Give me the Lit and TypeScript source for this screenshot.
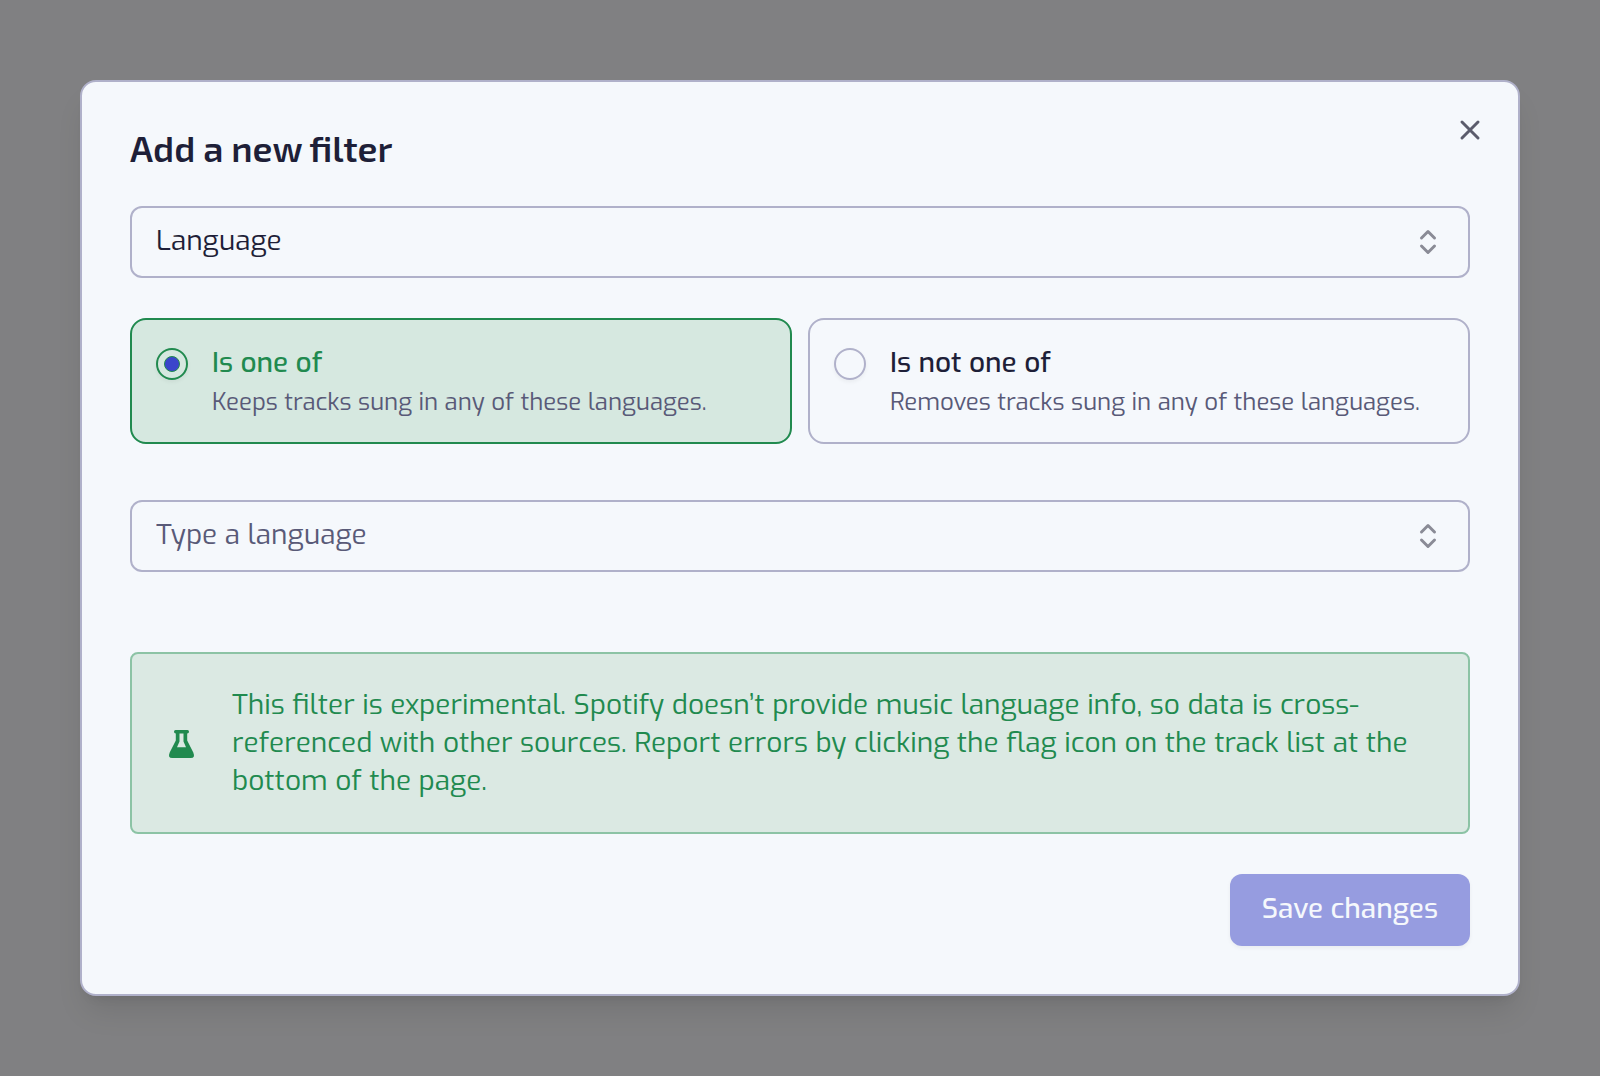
import { LitElement, html, css, svg } from "lit";
import { customElement, state } from "lit/decorators.js";

interface Choice {
  value: string;
  label: string;
  description: string;
}

const CHOICES: Choice[] = [
  { value: "is", label: "Is one of", description: "Keeps tracks sung in any of these languages." },
  { value: "is-not", label: "Is not one of", description: "Removes tracks sung in any of these languages." },
];

const chevrons = html`<svg class="chevrons" viewBox="0 0 32 32" aria-hidden="true">
  ${svg`<path d="M9.500 12L16 5.500L22.500 12M9.500 20L16 26.500L22.500 20" />`}
</svg>`;

@customElement("app-root")
export class AppRoot extends LitElement {
  static styles = css`
    :host {
      --surface: #f5f8fc;
      --ink: #1e1f38;
      --muted: #595a78;
      --line: #b0b1ca;
      --green: #218a4f;
      display: flex;
      align-items: center;
      box-sizing: border-box;
      min-height: 100vh;
      padding: 80px;
      background: #808082;
      color: var(--ink);
      font-family: Exo, "Exo 2", Roboto, "Liberation Sans", sans-serif;
      font-size: 28px;
      line-height: 38px;
    }
    * {
      box-sizing: border-box;
    }
    button,
    input,
    select {
      font: inherit;
      color: inherit;
      margin: 0;
    }
    .dialog {
      position: relative;
      flex: 1;
      min-width: 0;
      display: flex;
      flex-direction: column;
      padding: 48px;
      border: 2px solid var(--line);
      border-radius: 16px;
      background: var(--surface);
      box-shadow: 0 20px 30px -6px rgb(0 0 0 / 0.1), 0 8px 12px -8px rgb(0 0 0 / 0.1);
    }
    .title {
      margin: 0 0 40px;
      font-family: "Exo 2", Exo, Roboto, "Liberation Sans", sans-serif;
      font-size: 36px;
      line-height: 36px;
      font-weight: 600;
    }
    .close {
      position: absolute;
      top: 32px;
      right: 32px;
      width: 32px;
      height: 32px;
      padding: 0;
      border: 0;
      background: none;
      color: #5b5c6c;
    }
    .close svg {
      display: block;
      width: 32px;
      height: 32px;
      fill: none;
      stroke: currentColor;
      stroke-width: 3;
      stroke-linecap: round;
    }
    .field {
      position: relative;
      display: flex;
    }
    .control {
      flex: 1;
      min-width: 0;
      height: 72px;
      padding: 0 72px 4px 24px;
      border: 2px solid var(--line);
      border-radius: 12px;
      background: transparent;
      appearance: none;
      outline: none;
    }
    select.control {
      padding-bottom: 2px;
    }
    .control::placeholder {
      color: var(--muted);
      opacity: 1;
    }
    .chevrons {
      position: absolute;
      top: 20px;
      right: 26px;
      width: 32px;
      height: 32px;
      fill: none;
      stroke: #8a8b96;
      stroke-width: 3;
      stroke-linecap: round;
      stroke-linejoin: round;
      pointer-events: none;
    }
    .choices {
      display: grid;
      grid-template-columns: 1fr 1fr;
      gap: 16px;
      margin: 40px 0 56px;
      padding: 0;
      border: 0;
      min-width: 0;
    }
    .choice {
      display: flex;
      gap: 24px;
      padding: 24px 24px 20px;
      border: 2px solid var(--line);
      border-radius: 16px;
    }
    .choice.selected {
      border-color: var(--green);
      background: #d6e8e0;
    }
    .radio {
      flex: none;
      display: grid;
      place-items: center;
      width: 32px;
      height: 32px;
      margin-top: 4px;
      border: 2px solid var(--line);
      border-radius: 50%;
      appearance: none;
      box-shadow: 0 2px 4px rgb(0 0 0 / 0.05);
    }
    .radio:checked {
      border-color: var(--green);
    }
    .radio:checked::before {
      content: "";
      width: 14px;
      height: 14px;
      border: 1px solid var(--green);
      border-radius: 50%;
      background: #3b45cb;
    }
    .choice-text {
      display: flex;
      flex-direction: column;
    }
    .choice-label {
      font-weight: 500;
    }
    .selected .choice-label {
      color: var(--green);
    }
    .choice-description {
      font-size: 24px;
      line-height: 40px;
      color: var(--muted);
    }
    .notice {
      display: flex;
      align-items: center;
      gap: 32px;
      margin: 80px 0 40px;
      padding: 32px;
      border: 2px solid #8cc3a5;
      border-radius: 8px;
      background: #dbe9e3;
      color: var(--green);
    }
    .notice p {
      margin: 0;
    }
    .flask {
      flex: none;
      width: 36px;
      height: 36px;
      fill: currentColor;
    }
    .save {
      align-self: flex-end;
      height: 72px;
      padding: 0 32px 2px;
      border: 0;
      border-radius: 12px;
      background: #969ce0;
      color: var(--surface);
      font-weight: 500;
      box-shadow: 0 2px 4px rgb(0 0 0 / 0.05);
    }
  `;

  @state() private choice = "is";

  render() {
    return html`
      <section class="dialog" role="dialog" aria-labelledby="title">
        <h1 class="title" id="title">Add a new filter</h1>
        <button class="close" type="button" aria-label="Close">
          <svg viewBox="0 0 32 32" aria-hidden="true"><path d="M8 8L24 24M24 8L8 24" /></svg>
        </button>

        <div class="field">
          <select class="control" aria-label="Filter type">
            <option>Language</option>
          </select>
          ${chevrons}
        </div>

        <fieldset class="choices" aria-label="Condition">
          ${CHOICES.map(
            (c) => html`
              <label class="choice ${c.value === this.choice ? "selected" : ""}">
                <input
                  class="radio"
                  type="radio"
                  name="condition"
                  .value=${c.value}
                  .checked=${c.value === this.choice}
                  @change=${() => (this.choice = c.value)}
                />
                <span class="choice-text">
                  <span class="choice-label">${c.label}</span>
                  <span class="choice-description">${c.description}</span>
                </span>
              </label>
            `
          )}
        </fieldset>

        <div class="field">
          <input class="control" type="text" placeholder="Type a language" aria-label="Language" />
          ${chevrons}
        </div>

        <div class="notice">
          <svg class="flask" viewBox="0 0 36 36" aria-hidden="true">
            <path
              fill-rule="evenodd"
              d="M11.500 5H23.500Q25 5 25 6.800Q25 8.600 23.200 8.600V15.500L29.300 27.500Q31.500 33 26.800 33H8.200Q3.500 33 5.700 27.500L11.800 15.500V8.600Q10 8.600 10 6.800Q10 5 11.500 5ZM15.500 8.600V16.500L13 22.300H22L19.500 16.500V8.600Z"
            />
          </svg>
          <p>
            This filter is experimental. Spotify doesn’t provide music language info, so data is
            cross-referenced with other sources. Report errors by clicking the flag icon on the track
            list at the bottom of the page.
          </p>
        </div>

        <button class="save" type="button">Save changes</button>
      </section>
    `;
  }
}
